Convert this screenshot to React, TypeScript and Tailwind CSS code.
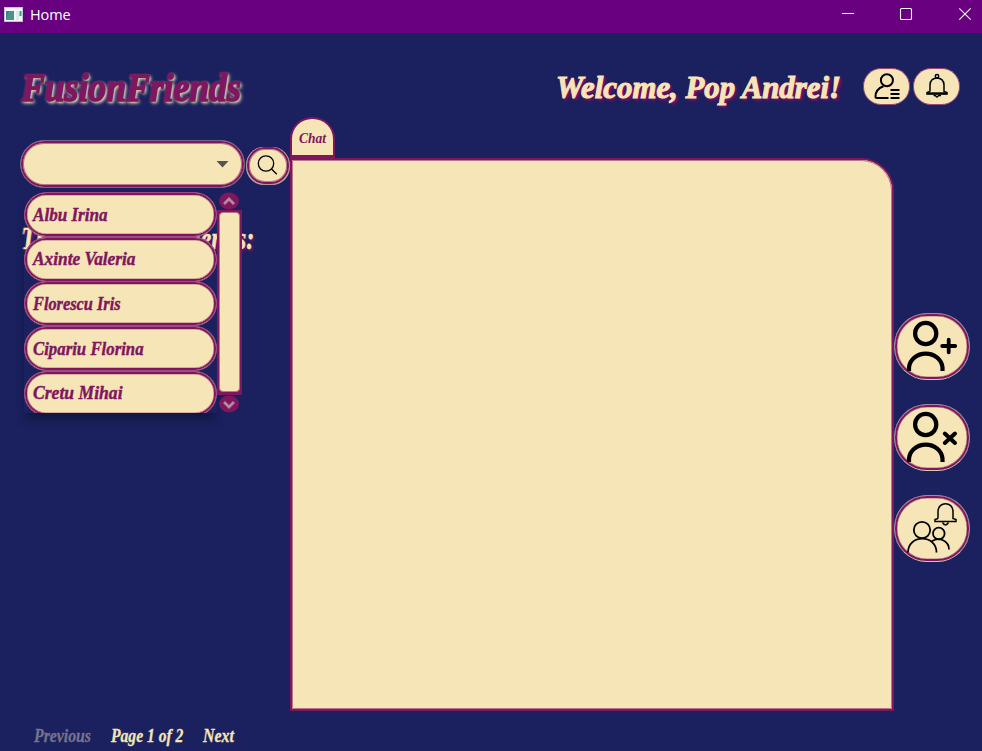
import { useLayoutEffect, useRef, type ReactNode } from 'react';

const script = "font-['Liberation_Serif',serif] font-bold italic whitespace-nowrap leading-none";

/* One line of display lettering, condensed or widened to an exact width. */
function Lettering({ width, className = '', children }: { width: number; className?: string; children: ReactNode }) {
  const ref = useRef<HTMLSpanElement>(null);
  useLayoutEffect(() => {
    const el = ref.current;
    if (el) el.style.transform = `scaleX(${width / el.offsetWidth})`;
  }, [width]);
  return (
    <span className="block" style={{ width }}>
      <span ref={ref} className={`inline-block origin-left align-top ${script} ${className}`}>{children}</span>
    </span>
  );
}

const friends = [
  { name: 'Albu Irina', width: 75 },
  { name: 'Axinte Valeria', width: 103 },
  { name: 'Florescu Iris', width: 88 },
  { name: 'Cipariu Florina', width: 111 },
  { name: 'Cretu Mihai', width: 90 },
];

function RoundButton({ label, children }: { label: string; children: ReactNode }) {
  return (
    <button aria-label={label} className="h-[67px] w-[76px] rounded-[33px] border border-[#9a8f9a] border-b-[#d5c7ac] bg-[#f6e5b6]">
      <span className="flex size-full items-center justify-center rounded-[32px] border-2 border-[#7f165f] shadow-[inset_0_0_0_0.5px_#b77a88]">{children}</span>
    </button>
  );
}

function Person({ cross }: { cross?: boolean }) {
  return (
    <svg width="70" height="60" viewBox="897 317 70 60" fill="none" stroke="#000" strokeWidth="4.2" strokeLinecap="round">
      <circle cx="925.7" cy="333.5" r="10.6" />
      <path d="M909 371V367.5A16.8 15 0 0 1 942.5 367.5V371" strokeLinecap="butt" />
      {cross ? <path d="M944.8 342.5l10.2 9.5M955 342.5l-10.2 9.5" strokeWidth="4" /> : <path d="M942.2 346h13M948.7 339.7v12.6" strokeWidth="3.8" />}
    </svg>
  );
}

export default function App() {
  return (
    <div className="flex h-[751px] w-[982px] flex-col overflow-hidden bg-[#1a215e] text-[#7f165f]">
      <div className="flex h-[33px] shrink-0 items-start justify-between bg-[#69007f] text-white">
        <div className="flex items-center pt-[4px] pl-[4px]">
          <svg width="19" height="17" viewBox="0 0 19 17">
            <rect x=".5" y="1.5" width="18" height="14" fill="#f4f7f8" stroke="#b9c9cc" />
            <rect x="2" y="5" width="8" height="9" fill="#4a9389" />
            <path d="M2 14V5h3z" fill="#4876a5" />
            <path d="M12 5h3v9h-3z" fill="#e2e8eb" />
            <path d="M16.5 5v5" stroke="#39958a" strokeWidth="2" />
          </svg>
          <span className="ml-[7px] font-['Open_Sans',sans-serif] text-[14.5px] leading-[21px] tracking-[-0.1px]">Home</span>
        </div>
        <svg width="142" height="33" viewBox="840 0 142 33" fill="none" stroke="white" strokeWidth="1.1">
          <path d="M842 13.5h12M959.3 8.3l11.4 11.4M970.7 8.3l-11.4 11.4" />
          <rect x="900.5" y="8.5" width="11" height="11" rx="1" />
        </svg>
      </div>

      <header className="flex h-[83px] shrink-0 items-start">
        <div className="ml-[21px] w-[535px] pt-[35px]">
          <Lettering width={220} className="text-[40px] [-webkit-text-stroke:1.7px_#7f165f] [text-shadow:1px_1px_3px_#f6e5b6,2px_2px_4px_#f6e5b6]">FusionFriends</Lettering>
        </div>
        <div className="w-[307px] pt-[38px]">
          <Lettering width={285} className="text-[32px] text-[#f6e5b6] [-webkit-text-stroke:1.1px_#f6e5b6] [text-shadow:2px_2px_4px_#9c0b64,1px_1px_2px_#9c0b64]">Welcome, Pop Andrei!</Lettering>
        </div>
        <div className="flex gap-[3px] pt-[35px]">
          <button aria-label="Profile" className="flex h-[37px] w-[47px] items-center justify-center rounded-[18px] border-[1.5px] border-[#9b4674] bg-[#f6e5b6]">
            <svg width="40" height="32" viewBox="866.5 71 40 32" fill="none" stroke="#000" strokeWidth="2">
              <circle cx="886.4" cy="80.3" r="6" />
              <path d="M883 86.2C878 88 875 92 875 96.5Q875 98 876.5 98H888M890 90h9M890 94h9M890 98h9" />
            </svg>
          </button>
          <button aria-label="Notifications" className="flex h-[37px] w-[47px] items-center justify-center rounded-[18px] border-[1.5px] border-[#9b4674] bg-[#f6e5b6]">
            <svg width="40" height="32" viewBox="916.5 71 40 32" fill="none" stroke="#000" strokeWidth="1.5">
              <path d="M929.5 91.5V85C929.5 75.5 943.5 75.5 943.5 85V91.5L946.5 92.5V94H926.5V92.5L929.5 91.5" />
              <path d="M926.5 93.3h20" strokeWidth="2" />
              <circle cx="936.5" cy="76.3" r="1.7" />
              <path d="M933 95.5h2q1.5 3 3 0h2.5" />
            </svg>
          </button>
        </div>
      </header>

      <div className="flex min-h-0 flex-1">
        <aside className="relative flex w-[290px] shrink-0 flex-col pt-[24px] pl-[20px]">
          <div className="flex items-center gap-px">
            <div className="flex h-[48px] w-[225px] items-center justify-end rounded-full border border-[#736385] bg-[#f6e5b6]">
              <div className="flex size-full items-center justify-end rounded-full border-2 border-[#7f165f] pr-[13px] shadow-[inset_0_0_0_1px_#b77a88]">
                <svg width="13" height="8" viewBox="0 0 13 8"><path d="M.5 1h12l-6 6.5z" fill="#555450" /></svg>
              </div>
            </div>
            <button aria-label="Search" className="mt-[3px] h-[38px] w-[44px] rounded-[18px] border border-t-0 border-[#a99b9c] bg-[#f6e5b6]">
              <span className="flex size-full items-center justify-center rounded-[18px] border-2 border-[#7f165f] shadow-[inset_0_0_0_1px_#b77a88]">
                <svg width="24" height="24" viewBox="256 153 24 24" fill="none" stroke="#000" strokeWidth="1.3"><circle cx="266" cy="163.5" r="7.7" /><path d="M271.5 169l5.3 5.3" /></svg>
              </span>
            </button>
          </div>
          <div className="mt-[34px] pl-px">
            <Lettering width={233} className="text-[32px] text-[#f6e5b6] [-webkit-text-stroke:0.6px_#f6e5b6] [text-shadow:2px_2px_4px_#9c0b64]">These are your friends:</Lettering>
          </div>

          <div className="absolute top-[76px] left-[24px] z-10 flex h-[221px] w-[218px]">
            <div className="flex h-[221px] w-[193px] flex-col overflow-hidden rounded-t-[22px] shadow-[0_8px_10px_-2px_#11173f]">
              {friends.map(({ name, width }) => (
                <div key={name} className="h-[44.7px] shrink-0">
                  <div className="h-[45px] rounded-[22px] border border-[#9b4d7e] bg-[#f6e5b6]">
                    <div className="flex size-full items-center rounded-[21px] border-2 border-[#7f165f] pt-[6px] pl-[6px] shadow-[inset_0_0_0_0.5px_#b77a88]">
                      <Lettering width={width} className="text-[18px] [-webkit-text-stroke:0.4px_#7f165f]">{name}</Lettering>
                    </div>
                  </div>
                </div>
              ))}
            </div>
            <div className="flex w-[25px] flex-col items-start">
              <svg className="ml-[2px]" width="20" height="18" viewBox="0 0 20 18"><ellipse cx="10" cy="9" rx="10" ry="8.5" fill="#7f165f" /><path d="M5 12l5-5 5 5" fill="none" stroke="#b18b9c" strokeWidth="2.8" /></svg>
              <div className="h-[186px] w-full bg-[#7f165f] px-[2px] pt-[2px] pb-[3px]"><div className="h-full rounded-[4px] border border-[#b77a88] bg-[#f6e5b6]" /></div>
              <svg className="ml-[2px]" width="20" height="18" viewBox="0 0 20 18"><ellipse cx="10" cy="9" rx="10" ry="8.5" fill="#7f165f" /><path d="M5 7l5 5 5-5" fill="none" stroke="#b18b9c" strokeWidth="2.8" /></svg>
            </div>
          </div>

          <div className="mt-auto flex pl-[14px]">
            <Lettering width={57} className="text-[18px] text-[#77718b] [-webkit-text-stroke:0.3px_#77718b]">Previous</Lettering>
            <div className="ml-[20px]"><Lettering width={72} className="text-[18px] text-[#f6e5b6] [-webkit-text-stroke:0.3px_#f6e5b6]">Page 1 of 2</Lettering></div>
            <div className="ml-[20px]"><Lettering width={31} className="text-[18px] text-[#f6e5b6] [-webkit-text-stroke:0.3px_#f6e5b6]">Next</Lettering></div>
          </div>
        </aside>

        <section className="w-[604px] shrink-0">
          <div className="h-[42px] pt-px">
            <div className="flex h-[41px] w-[45px] justify-center rounded-t-[22px] border-2 border-b-[3px] border-[#7f165f] bg-[#f6e5b6] pt-[12px]">
              <Lettering width={27} className="text-[15px]">Chat</Lettering>
            </div>
          </div>
          <div className="h-[553px] rounded-tr-[33px] border-2 border-[#7f165f] bg-[#f6e5b6]">
            <div className="size-full rounded-tr-[31px] border border-[#b77a88]" />
          </div>
        </section>

        <div className="flex flex-col gap-[24px] pt-[197px]">
          <RoundButton label="Add friend"><Person /></RoundButton>
          <RoundButton label="Remove friend"><Person cross /></RoundButton>
          <RoundButton label="Friend requests">
            <svg width="70" height="60" viewBox="897 499 70 60" fill="none" stroke="#000" strokeWidth="1.8">
              <circle cx="922" cy="530" r="8.2" />
              <path d="M908 552.5C908 534 936.5 534 936.5 552.5" />
              <circle cx="938.8" cy="533.5" r="5.8" />
              <path d="M931.5 541.5C939 536 949 541 949 549.5" />
              <path d="M938 518.5V511.5C938 501 953 501 953 511.5V518.5L956 519.5V521.5H935V519.5L938 518.5" strokeWidth="1.5" />
              <path d="M942.5 522.5q3 5 6 0" strokeWidth="1.5" />
            </svg>
          </RoundButton>
        </div>
      </div>
    </div>
  );
}
